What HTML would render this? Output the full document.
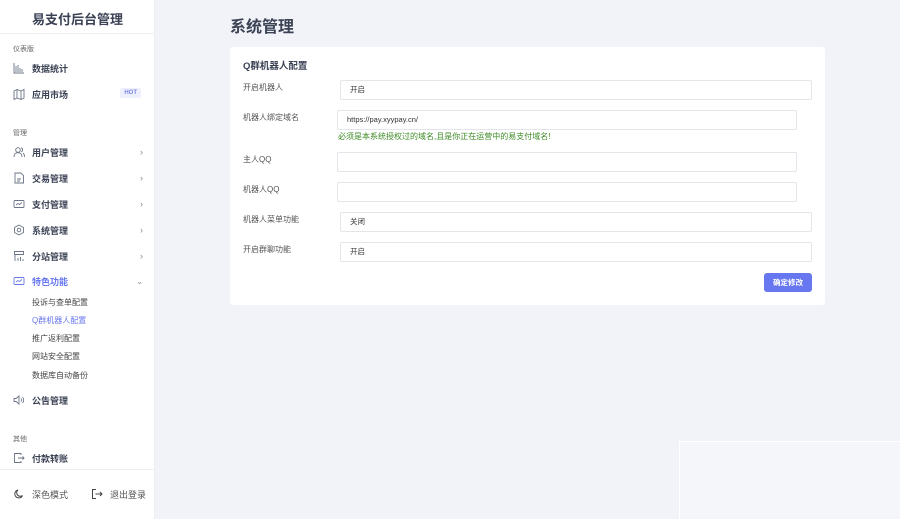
<!DOCTYPE html>
<html><head><meta charset="utf-8"><style>
*{margin:0;padding:0;box-sizing:border-box}
body{width:900px;height:519px;background:#f2f3f8;font-family:"Liberation Sans","Noto Sans CJK SC",sans-serif;position:relative;overflow:hidden;color:#333}
.sb{position:absolute;left:0;top:0;width:155px;height:519px;background:#fff;border-right:1px solid #eceef3}
.t{position:absolute;left:0;width:155px;top:9px;text-align:center;font-size:13px;font-weight:bold;color:#3b4254}
.hr{position:absolute;left:0;width:155px;height:1px;background:#eef0f4}
.g{position:absolute;left:13px;font-size:7px;color:#666}
.it{position:absolute;left:13px;font-size:9px;font-weight:bold;color:#3b4254;display:flex;align-items:center;width:130px;height:14px}
.it svg{width:12px;height:12px;margin-right:7px;flex:none}
.ar{position:absolute;right:0;font-size:9px;color:#888;font-weight:normal}
.sub{position:absolute;left:32px;font-size:8px;color:#444}
.hot{position:absolute;right:2px;top:1px;background:#eef0fd;color:#7d86e8;font-size:6px;padding:2px 4px;border-radius:2px}
.h1{position:absolute;left:230px;top:13px;font-size:16px;font-weight:bold;color:#3b4254}
.card{position:absolute;left:230px;top:47px;width:595px;height:258px;background:#fff;border-radius:3px}
.ct{position:absolute;left:243px;top:58px;font-size:9.5px;font-weight:bold;color:#3b4254}
.lb{position:absolute;left:243px;font-size:8px;color:#555}
.in{position:absolute;height:20px;border:1px solid #e3e5ea;border-radius:2px;background:#fff;font-size:7.5px;color:#333;padding-left:9px;line-height:18px}
.btn{position:absolute;left:764px;top:273px;width:48px;height:19px;background:#6777ef;color:#fff;font-size:7.5px;font-weight:bold;text-align:center;line-height:19px;border-radius:3px}
</style></head><body>
<div class="sb">
<div class="t">易支付后台管理</div>
<div class="hr" style="top:33px"></div>
<div class="g" style="top:44px">仪表版</div>
<div class="it" style="top:61px"><svg viewBox="0 0 12 12" fill="none" stroke="#6b7385" stroke-width="0.9"><path d="M1 1v10h10M3 10V4M5 10V3M7 10V6M9 10V7"/></svg>数据统计</div>
<div class="it" style="top:87px"><svg viewBox="0 0 12 12" fill="none" stroke="#6b7385" stroke-width="0.9"><path d="M1 3l3-1.5 4 1.5 3-1.5v8.5l-3 1.5-4-1.5-3 1.5zM4 1.5v8.5M8 3v8.5"/></svg>应用市场<span class="hot">HOT</span></div>
<div class="g" style="top:128px">管理</div>
<div class="it" style="top:145px"><svg viewBox="0 0 12 12" fill="none" stroke="#6b7385" stroke-width="0.9"><circle cx="5" cy="4" r="2.3"/><path d="M1 11c0-3 2-4.3 4-4.3s4 1.3 4 4.3M8 1.8a2.2 2.2 0 010 4.2M10 7c1 .6 1.5 2 1.5 4"/></svg>用户管理<span class="ar">›</span></div>
<div class="it" style="top:171px"><svg viewBox="0 0 12 12" fill="none" stroke="#6b7385" stroke-width="0.9"><path d="M2 1h6l2.5 2.5V11H2zM4 7h4M4 9h3"/></svg>交易管理<span class="ar">›</span></div>
<div class="it" style="top:197px"><svg viewBox="0 0 12 12" fill="none" stroke="#6b7385" stroke-width="0.9"><rect x="1" y="2.5" width="10" height="7" rx="1"/><path d="M3 7l2-1.5 1.5 1 2.5-2"/></svg>支付管理<span class="ar">›</span></div>
<div class="it" style="top:223px"><svg viewBox="0 0 12 12" fill="none" stroke="#6b7385" stroke-width="0.9"><path d="M6 1l4.5 2.5v5L6 11 1.5 8.5v-5z"/><circle cx="6" cy="6" r="1.8"/></svg>系统管理<span class="ar">›</span></div>
<div class="it" style="top:249px"><svg viewBox="0 0 12 12" fill="none" stroke="#6b7385" stroke-width="0.9"><path d="M1.5 1.5h9v3h-9zM2 4.5V11M5 8v3M7.5 7v4M10 9v2"/></svg>分站管理<span class="ar">›</span></div>
<div class="it" style="top:274px;color:#6777ef"><svg viewBox="0 0 12 12" fill="none" stroke="#6777ef" stroke-width="0.9"><rect x="1" y="2.5" width="10" height="7" rx="1"/><path d="M3 7l2-1.5 1.5 1 2.5-2"/></svg>特色功能<span class="ar" style="font-size:8px">⌄</span></div>
<div class="sub" style="top:297px">投诉与查单配置</div>
<div class="sub" style="top:315px;color:#6777ef">Q群机器人配置</div>
<div class="sub" style="top:333px">推广返利配置</div>
<div class="sub" style="top:351px">网站安全配置</div>
<div class="sub" style="top:370px">数据库自动备份</div>
<div class="it" style="top:393px"><svg viewBox="0 0 12 12" fill="none" stroke="#6b7385" stroke-width="0.9"><path d="M1 4.5h2l3-2.5v8L3 7.5H1zM8 4.5c.7.8.7 2.2 0 3M9.5 3c1.5 1.6 1.5 4.4 0 6"/></svg>公告管理</div>
<div class="g" style="top:434px">其他</div>
<div class="it" style="top:451px"><svg viewBox="0 0 12 12" fill="none" stroke="#6b7385" stroke-width="0.9"><path d="M8 3V1.5H1.5v9H8V9M5 6h6M9.5 4.5L11 6 9.5 7.5"/></svg>付款转账</div>
<div class="hr" style="top:469px"></div>
<div class="it" style="top:487px;font-weight:normal;color:#555"><svg viewBox="0 0 12 12" fill="none" stroke="#444" stroke-width="1"><path d="M5 2a4 4 0 104.5 5.5A3.5 3.5 0 015 2z"/></svg>深色模式</div>
<div class="it" style="top:487px;left:91px;width:60px;font-weight:normal;color:#555"><svg viewBox="0 0 12 12" fill="none" stroke="#444" stroke-width="1"><path d="M5 1.5H1.5v9H5M4.5 6H11M9 4l2 2-2 2"/></svg>退出登录</div>
</div>
<div class="h1">系统管理</div>
<div class="card"></div>
<div class="ct">Q群机器人配置</div>
<div class="lb" style="top:82px">开启机器人</div>
<div class="in" style="left:340px;top:80px;width:472px">开启</div>
<div class="lb" style="top:112px">机器人绑定域名</div>
<div class="in" style="left:337px;top:110px;width:460px">https://pay.xyypay.cn/</div>
<div style="position:absolute;left:338px;top:131px;font-size:8px;color:#3c8a24">必须是本系统授权过的域名,且是你正在运营中的易支付域名!</div>
<div class="lb" style="top:154px">主人QQ</div>
<div class="in" style="left:337px;top:152px;width:460px"></div>
<div class="lb" style="top:184px">机器人QQ</div>
<div class="in" style="left:337px;top:182px;width:460px"></div>
<div class="lb" style="top:214px">机器人菜单功能</div>
<div class="in" style="left:340px;top:212px;width:472px">关闭</div>
<div class="lb" style="top:244px">开启群聊功能</div>
<div class="in" style="left:340px;top:242px;width:472px">开启</div>
<div class="btn">确定修改</div>
<div style="position:absolute;left:679px;top:441px;width:221px;height:78px;background:#f5f6f9;border-left:1px solid #fff;border-top:1px solid #fff"></div>
</body></html>
